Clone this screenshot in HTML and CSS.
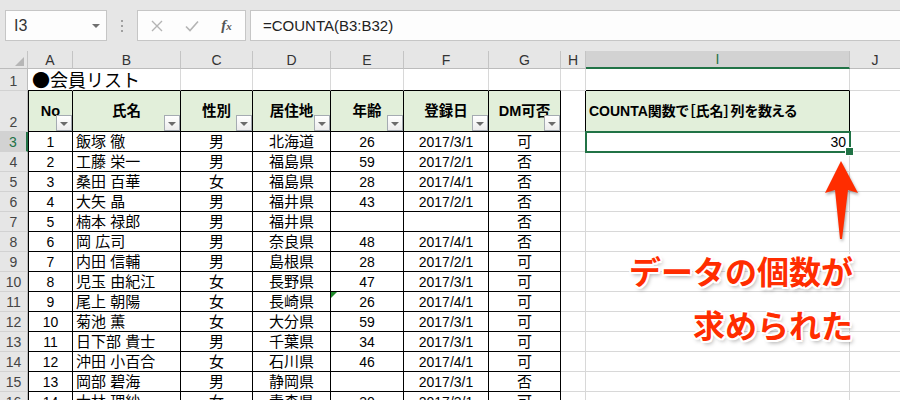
FILE: index.html
```html
<!DOCTYPE html>
<html lang="ja">
<head>
    <meta charset="UTF-8">
    <title>COUNTA関数でデータの個数を数える</title>
    <link rel="stylesheet" href="styles.css">
</head>
<body>
    <div class="bar">
        <div class="name-box">
            <span>I3</span>
            <span class="drop"></span>
        </div>
        <div class="grip"><i></i><i></i><i></i></div>
        <div class="fx-buttons">
            <span class="slot">
                <svg width="12" height="12" viewBox="0 0 12 12"><path d="M1 1 L11 11 M11 1 L1 11" stroke="#b4b4b4" stroke-width="1.4" fill="none"/></svg>
            </span>
            <span class="slot">
                <svg width="14" height="12" viewBox="0 0 14 12"><path d="M1 6.5 L5 10.5 L13 1.5" stroke="#b4b4b4" stroke-width="1.6" fill="none"/></svg>
            </span>
            <span class="slot fx">f<small>x</small></span>
        </div>
        <div class="formula">=COUNTA(B3:B32)</div>
    </div>

    <div class="book">
        <div class="sheet" id="sheet">
            <!-- column headers -->
            <div class="ch corner"><span class="tri"></span></div>
            <div class="ch">A</div>
            <div class="ch">B</div>
            <div class="ch">C</div>
            <div class="ch">D</div>
            <div class="ch">E</div>
            <div class="ch">F</div>
            <div class="ch">G</div>
            <div class="ch">H</div>
            <div class="ch sel">I</div>
            <div class="ch last">J</div>

            <!-- row 1 -->
            <div class="rh">1</div>
            <div class="c top over"><span class="title">●会員リスト</span></div>
            <div class="c top"></div>
            <div class="c top"></div>
            <div class="c top"></div>
            <div class="c top"></div>
            <div class="c top"></div>
            <div class="c top"></div>
            <div class="c"></div>
            <div class="c top"></div>
            <div class="c last"></div>

            <!-- row 2 : table headers -->
            <div class="rh">2</div>
            <div class="c th tl">No<button class="filter"></button></div>
            <div class="c th">氏名<button class="filter"></button></div>
            <div class="c th">性別<button class="filter"></button></div>
            <div class="c th">居住地<button class="filter"></button></div>
            <div class="c th">年齢<button class="filter"></button></div>
            <div class="c th">登録日<button class="filter"></button></div>
            <div class="c th">DM可否<button class="filter"></button></div>
            <div class="c hb"></div>
            <div class="c th label">COUNTA関数で［氏名］列を数える</div>
            <div class="c last"></div>
        </div>

        <div class="note">データの個数が<br>求められた</div>
        <svg class="arrow" viewBox="0 0 45 90" width="45" height="90">
            <path d="M21 6 L38 38 L28 35 L22 84 L20 84 L15 35 L5 38 Z" fill="#ff2d00"/>
        </svg>
    </div>

    <script>
        const sheet = document.getElementById('sheet');
        const members = [
            ['1', '飯塚 徹', '男', '北海道', '26', '2017/3/1', '可'],
            ['2', '工藤 栄一', '男', '福島県', '59', '2017/2/1', '否'],
            ['3', '桑田 百華', '女', '福島県', '28', '2017/4/1', '否'],
            ['4', '大矢 晶', '男', '福井県', '43', '2017/2/1', '否'],
            ['5', '楠本 禄郎', '男', '福井県', '', '', '否'],
            ['6', '岡 広司', '男', '奈良県', '48', '2017/4/1', '否'],
            ['7', '内田 信輔', '男', '島根県', '28', '2017/2/1', '可'],
            ['8', '児玉 由紀江', '女', '長野県', '47', '2017/3/1', '可'],
            ['9', '尾上 朝陽', '女', '長崎県', '26', '2017/4/1', '可'],
            ['10', '菊池 薫', '女', '大分県', '59', '2017/3/1', '可'],
            ['11', '日下部 貴士', '男', '千葉県', '34', '2017/3/1', '可'],
            ['12', '沖田 小百合', '女', '石川県', '46', '2017/4/1', '可'],
            ['13', '岡部 碧海', '男', '静岡県', '', '2017/3/1', '否'],
            ['14', '大林 理紗', '女', '青森県', '30', '2017/3/1', '可']
        ];
        const align = ['num', 'name', 'mid', 'mid', 'num', 'num', 'mid'];

        members.forEach((m, i) => {
            const row = i + 3;
            let html = `<div class="rh${row === 3 ? ' active' : ''}">${row}</div>`;
            m.forEach((v, j) => {
                let cls = 'c tb ' + align[j];
                if (j === 0) cls += ' tl';
                if (row === 11 && j === 4) cls += ' flag'; // age stored as text
                html += `<div class="${cls}">${v}</div>`;
            });
            html += '<div class="c"></div>';
            html += row === 3 ? '<div class="c picked">30</div>' : '<div class="c"></div>';
            html += '<div class="c last"></div>';
            sheet.insertAdjacentHTML('beforeend', html);
        });
    </script>
</body>
</html>
```

FILE: styles.css
```css
* {
    box-sizing: border-box;
}

body {
    margin: 0;
    height: 400px;
    overflow: hidden;
    background-color: #fff;
    font-family: "Liberation Sans", "Noto Sans CJK JP", sans-serif;
    color: #000;
}

/* formula bar */
.bar {
    display: flex;
    height: 51px;
    padding: 10px 0 10px 5px;
    background-color: #e6e6e6;
}

.name-box {
    width: 102px;
    display: flex;
    align-items: center;
    justify-content: space-between;
    padding: 0 6px 0 8px;
    background-color: #fdfdfd;
    border: 1px solid #c6c6c6;
    font-size: 16px;
    color: #333;
}

.drop {
    border-left: 4px solid transparent;
    border-right: 4px solid transparent;
    border-top: 4px solid #707070;
}

.grip {
    width: 30px;
    display: flex;
    flex-direction: column;
    align-items: center;
    justify-content: center;
    gap: 3px;
}

.grip i {
    width: 2px;
    height: 2px;
    background-color: #a0a0a0;
}

.fx-buttons {
    width: 109px;
    display: flex;
    align-items: center;
    padding-left: 1px;
    background-color: #fdfdfd;
    border: 1px solid #c6c6c6;
}

.slot {
    width: 35px;
    display: flex;
    justify-content: center;
    align-items: center;
}

.fx {
    font-family: "Liberation Serif", serif;
    font-style: italic;
    font-weight: bold;
    font-size: 15px;
    color: #555;
}

.fx small {
    font-size: 11px;
}

.formula {
    flex: 1;
    margin-left: 4px;
    display: flex;
    align-items: center;
    padding-left: 12px;
    background-color: #fdfdfd;
    border: 1px solid #c6c6c6;
    border-right: none;
    font-size: 15px;
    color: #222;
}

/* grid */
.book {
    position: relative;
}

.sheet {
    display: grid;
    grid-template-columns: 28px 45px 108px 72px 78px 73px 85px 72px 25px 264px 50px;
    grid-template-rows: 18px 22px 41px;
    grid-auto-rows: 20px;
}

.ch {
    display: flex;
    align-items: center;
    justify-content: center;
    background-color: #e6e6e6;
    border-right: 1px solid #c4c4c4;
    border-bottom: 1px solid #bcbcbc;
    font-size: 14px;
    color: #333;
}

.ch.corner {
    justify-content: flex-end;
    align-items: flex-end;
    padding: 0 3px 2px 0;
}

.tri {
    border-left: 9px solid transparent;
    border-bottom: 9px solid #b6b6b6;
}

.ch.sel {
    background-color: #d2d2d2;
    color: #217346;
    border-bottom: 2px solid #217346;
}

.rh {
    display: flex;
    align-items: flex-end;
    justify-content: center;
    background-color: #e6e6e6;
    border-right: 1px solid #bcbcbc;
    border-bottom: 1px solid #d2d2d2;
    font-size: 14px;
    line-height: 18px;
    color: #444;
}

.rh.active {
    background-color: #d2d2d2;
    color: #217346;
    border-right: 2px solid #217346;
}

.c {
    display: flex;
    align-items: flex-end;
    padding: 0 3px;
    border-right: 1px solid #d8d8d8;
    border-bottom: 1px solid #d8d8d8;
    font-size: 15px;
    line-height: 18px;
    white-space: nowrap;
}

.last {
    border-right: none;
}

.top {
    border-bottom-color: #000;
}

.over {
    border-right-color: transparent;
}

.title {
    font-family: "Noto Sans CJK JP", sans-serif;
    font-size: 18px;
    line-height: 21px;
    padding-left: 1px;
}

.tb {
    border-right-color: #000;
    border-bottom-color: #000;
}

.tl {
    border-left: 1px solid #000;
}

.hb {
    border-right-color: #000;
}

.th {
    position: relative;
    align-items: center;
    justify-content: center;
    background-color: #e2efda;
    border-right-color: #000;
    border-bottom-color: #000;
    font-weight: bold;
    font-size: 14.5px;
}

.th.label {
    justify-content: flex-start;
    padding-left: 3px;
    font-size: 14px;
    font-feature-settings: "palt";
}

.filter {
    position: absolute;
    right: 0;
    bottom: 0;
    width: 16px;
    height: 16px;
    padding: 0;
    display: flex;
    align-items: center;
    justify-content: center;
    background: linear-gradient(#fff, #ececec);
    border: 1px solid #a5abb2;
}

.filter::after {
    content: "";
    margin-top: 2px;
    border-left: 4px solid transparent;
    border-right: 4px solid transparent;
    border-top: 4px solid #6b6b6b;
}

.num {
    justify-content: center;
    font-size: 14px;
}

.mid {
    justify-content: center;
}

.name {
    justify-content: flex-start;
}

.flag {
    position: relative;
}

.flag::before {
    content: "";
    position: absolute;
    left: 0;
    top: 0;
    border-top: 6px solid #1f8a2a;
    border-right: 6px solid transparent;
}

/* active cell I3 */
.picked {
    position: relative;
    justify-content: flex-end;
    padding-right: 3px;
    font-size: 14px;
}

.picked::before {
    content: "";
    position: absolute;
    left: -1px;
    top: -1px;
    right: -2px;
    bottom: -2px;
    border: 2px solid #217346;
}

.picked::after {
    content: "";
    position: absolute;
    right: -5px;
    bottom: -5px;
    width: 7px;
    height: 7px;
    background-color: #217346;
    border: 1px solid #fff;
}

/* callout */
.note {
    position: absolute;
    right: 47px;
    top: 192px;
    text-align: right;
    font-family: "Noto Sans CJK JP", sans-serif;
    font-weight: 700;
    font-size: 32px;
    line-height: 54px;
    color: #ff2d00;
    text-shadow: 2px 0 #fff, -2px 0 #fff, 0 2px #fff, 0 -2px #fff,
        1.5px 1.5px #fff, -1.5px -1.5px #fff, 1.5px -1.5px #fff, -1.5px 1.5px #fff,
        2px 3px 4px rgba(0, 0, 0, 0.35);
}

.arrow {
    position: absolute;
    left: 820px;
    top: 104px;
    filter: drop-shadow(1px 2px 1.5px rgba(0, 0, 0, 0.35));
}
```
